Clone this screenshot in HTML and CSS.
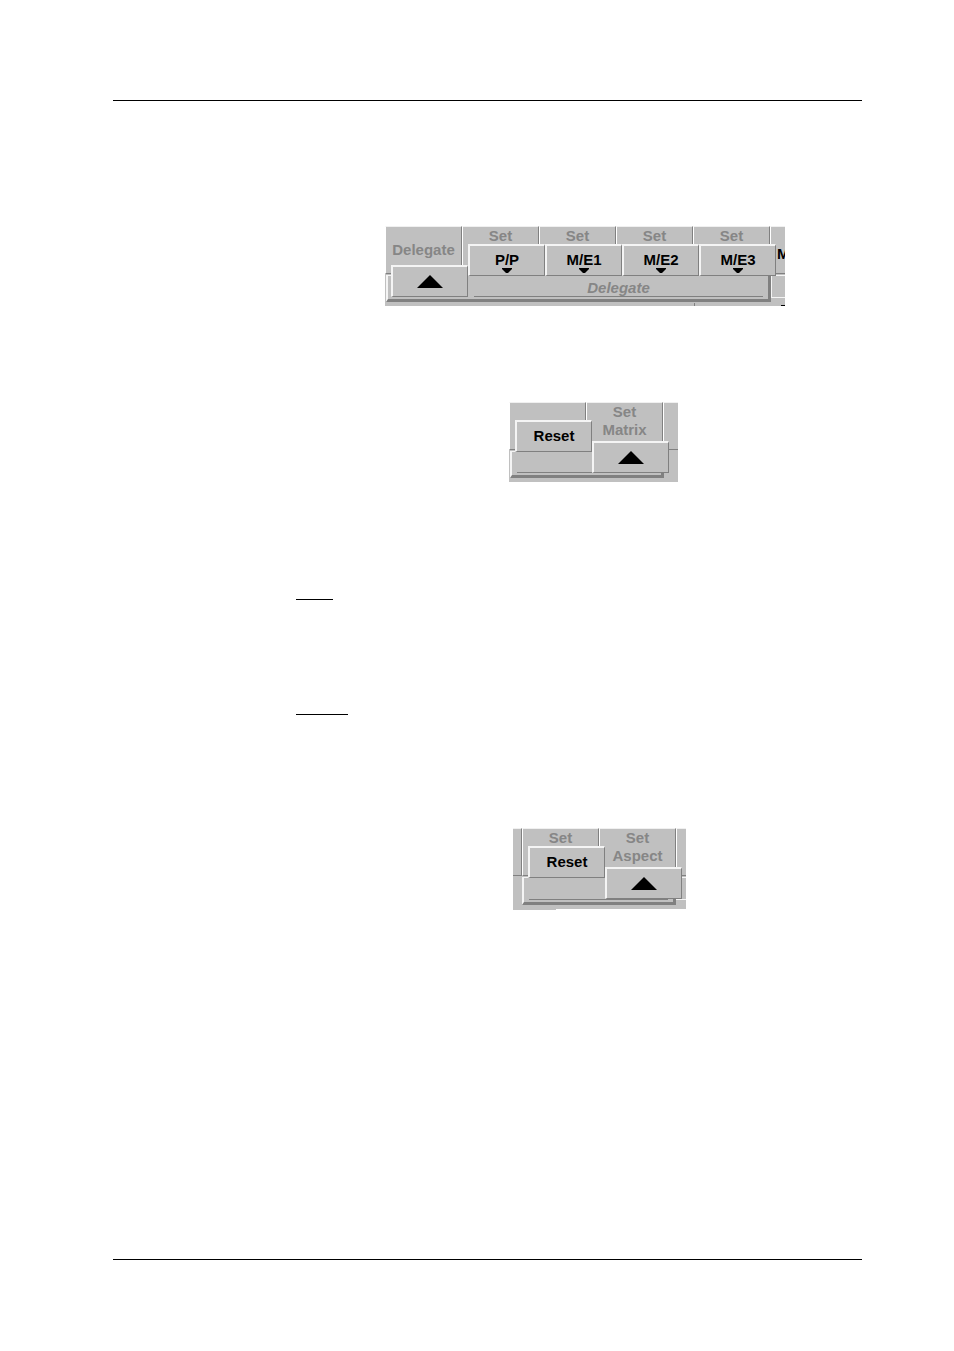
FILE: index.html
```html
<!DOCTYPE html>
<html lang="en">
<head>
    <meta charset="UTF-8">
    <meta name="viewport" content="width=device-width, initial-scale=1.0">
    <title>Delegate</title>
    <link rel="stylesheet" href="styles.css">
</head>
<body>
    <header class="page-header"></header>

    <main class="content">
        <div class="panel panel-delegate">
            <div class="tabs">
                <div class="tab tab-middle">
                    <span class="tab-label">Delegate</span>
                    <button class="key key-low" aria-label="Up"><svg class="up" viewBox="0 0 26 13"><path d="M13 0L26 13H0z"/></svg></button>
                </div>
                <div class="tab">
                    <span class="tab-label">Set</span>
                    <button class="key">P/P<svg class="down" viewBox="0 0 10 5"><path d="M0 0h10v1L6 5H4L0 1z"/></svg></button>
                </div>
                <div class="tab">
                    <span class="tab-label">Set</span>
                    <button class="key">M/E1<svg class="down" viewBox="0 0 10 5"><path d="M0 0h10v1L6 5H4L0 1z"/></svg></button>
                </div>
                <div class="tab">
                    <span class="tab-label">Set</span>
                    <button class="key">M/E2<svg class="down" viewBox="0 0 10 5"><path d="M0 0h10v1L6 5H4L0 1z"/></svg></button>
                </div>
                <div class="tab">
                    <span class="tab-label">Set</span>
                    <button class="key">M/E3<svg class="down" viewBox="0 0 10 5"><path d="M0 0h10v1L6 5H4L0 1z"/></svg></button>
                </div>
                <div class="tab tab-cut">M</div>
            </div>
            <div class="trays">
                <div class="tray tray-5"><div class="tray-title">Delegate</div></div>
                <div class="tray-next"></div>
            </div>
            <div class="under">
                <div class="under-left"></div>
                <div class="under-mark"></div>
            </div>
        </div>

        <div class="panel panel-matrix">
            <div class="tabs">
                <div class="tab">
                    <button class="key">Reset</button>
                </div>
                <div class="tab">
                    <span class="tab-label">Set<br>Matrix</span>
                    <button class="key key-low" aria-label="Up"><svg class="up" viewBox="0 0 26 13"><path d="M13 0L26 13H0z"/></svg></button>
                </div>
                <div class="tab tab-rest"></div>
            </div>
            <div class="trays">
                <div class="tray tray-2"><div class="tray-title"></div></div>
            </div>
        </div>

        <hr class="term term-short">
        <hr class="term">

        <div class="panel panel-aspect">
            <div class="tabs">
                <div class="tab tab-start"></div>
                <div class="tab">
                    <span class="tab-label">Set</span>
                    <button class="key">Reset</button>
                </div>
                <div class="tab">
                    <span class="tab-label">Set<br>Aspect</span>
                    <button class="key key-low" aria-label="Up"><svg class="up" viewBox="0 0 26 13"><path d="M13 0L26 13H0z"/></svg></button>
                </div>
                <div class="tab tab-rest"></div>
            </div>
            <div class="trays">
                <div class="tray tray-2"><div class="tray-title"></div></div>
                <div class="tray-next"></div>
            </div>
            <div class="panel-edge"></div>
        </div>
    </main>

    <footer class="page-footer"></footer>
</body>
</html>
```
FILE: styles.css
```css
* {
    box-sizing: border-box;
}

body {
    display: flex;
    flex-direction: column;
    min-height: 100vh;
    margin: 0;
    padding: 0 92px 0 113px;
    background: #fff;
    color: #000;
    font-family: "Liberation Sans", Arial, sans-serif;
    font-size: 15px;
    font-weight: bold;
}

.page-header {
    height: 101px;
    border-bottom: 1px solid #000;
}

.page-footer {
    height: 92px;
    margin-top: auto;
    border-top: 1px solid #000;
}

.content {
    display: flex;
    flex-direction: column;
    align-items: flex-start;
    padding-left: 183px;
}

/* Panels */
.panel {
    display: flex;
    flex-direction: column;
    min-height: 80px;
    overflow: hidden;
    background: #c0c0c0;
}

.panel-delegate {
    margin: 125px 0 0 89px;
}

.panel-matrix {
    margin: 96px 0 0 213px;
}

.panel-aspect {
    min-height: 82px;
    margin: 113px 0 0 217px;
}

.tabs {
    display: flex;
    height: 48px;
}

.tab {
    position: relative;
    width: 77px;
    border: 1px solid #808080;
    border-top-color: #f0f0f0;
    border-left-color: #fff;
    text-align: center;
    line-height: 18px;
    color: #868686;
}

.tab-middle {
    padding-top: 14px;
}

.tab-cut {
    width: 15px;
    padding: 18px 0 0 6px;
    border-right: 0;
    text-align: left;
    color: #000;
}

.tab-rest {
    width: 15px;
    border-right: 0;
}

.panel-aspect .tab-rest {
    width: 10px;
}

.tab-start {
    width: 9px;
    border-left: 0;
}

/* Keys stand over the tabs and the tray */
.key {
    position: absolute;
    z-index: 1;
    top: 17px;
    left: 5px;
    display: flex;
    flex-direction: column;
    align-items: center;
    width: 77px;
    height: 32px;
    padding: 6px 0 0;
    border: 1px solid #808080;
    border-top: 2px solid #f4f4f4;
    border-left: 2px solid #f4f4f4;
    background: #c0c0c0;
    color: #000;
    font: inherit;
    line-height: 16px;
}

.key-low {
    top: 38px;
    padding-top: 8px;
}

.up {
    width: 26px;
    height: 13px;
}

.down {
    width: 10px;
    height: 5px;
}

/* Trays */
.trays {
    display: flex;
    height: 28px;
    padding: 1px 0 0 1px;
}

.panel-aspect .trays {
    height: 29px;
    padding-left: 9px;
}

.tray {
    padding: 0 5px;
    border: 2px solid #f4f4f4;
    border-top-width: 1px;
    border-right: 3px solid #808080;
    border-bottom: 3px solid #808080;
}

.tray-5 {
    width: 385px;
}

.tray-2 {
    width: 154px;
}

.tray-title {
    height: 21px;
    border-bottom: 1px solid #808080;
    text-align: center;
    line-height: 24px;
    font-style: italic;
    color: #868686;
}

.panel-aspect .tray-title {
    height: 22px;
}

.tray-5 .tray-title {
    margin-left: 81px;
}

.tray-next {
    flex: 1;
    height: 23px;
    border: 1px solid #f4f4f4;
    border-right: 0;
}

.under {
    display: flex;
    justify-content: space-between;
    align-items: flex-end;
    height: 4px;
}

.under-left {
    width: 310px;
    height: 3px;
    border-right: 1px solid #808080;
}

.under-mark {
    width: 4px;
    height: 1px;
    background: #000;
}

.panel-edge {
    height: 1px;
    margin: auto 0 0 43px;
    background: #fff;
}

/* Rules under the terms */
.term {
    width: 52px;
    height: 1px;
    margin: 114px 0 0;
    border: 0;
    background: #000;
}

.term-short {
    width: 37px;
    margin-top: 117px;
}
```
